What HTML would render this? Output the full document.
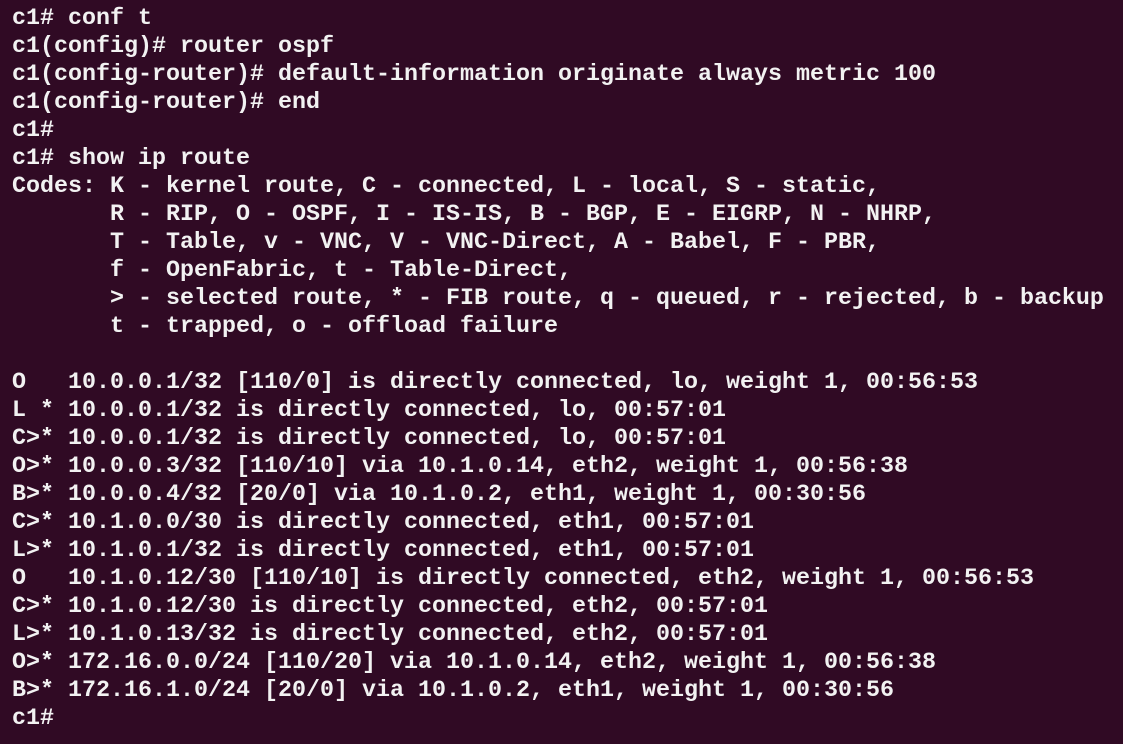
<!DOCTYPE html>
<html><head><meta charset="utf-8"><style>
html,body{margin:0;padding:0;background:#300a24;width:1123px;height:744px;overflow:hidden}
pre{margin:0;padding:5px 0 0 12px;font-family:"Liberation Mono","DejaVu Sans Mono",monospace;font-size:23.33px;line-height:28px;color:#f2f2f2;font-weight:bold;white-space:pre}
</style></head><body><pre>c1# conf t
c1(config)# router ospf
c1(config-router)# default-information originate always metric 100
c1(config-router)# end
c1#
c1# show ip route
Codes: K - kernel route, C - connected, L - local, S - static,
       R - RIP, O - OSPF, I - IS-IS, B - BGP, E - EIGRP, N - NHRP,
       T - Table, v - VNC, V - VNC-Direct, A - Babel, F - PBR,
       f - OpenFabric, t - Table-Direct,
       &gt; - selected route, * - FIB route, q - queued, r - rejected, b - backup
       t - trapped, o - offload failure

O   10.0.0.1/32 [110/0] is directly connected, lo, weight 1, 00:56:53
L * 10.0.0.1/32 is directly connected, lo, 00:57:01
C&gt;* 10.0.0.1/32 is directly connected, lo, 00:57:01
O&gt;* 10.0.0.3/32 [110/10] via 10.1.0.14, eth2, weight 1, 00:56:38
B&gt;* 10.0.0.4/32 [20/0] via 10.1.0.2, eth1, weight 1, 00:30:56
C&gt;* 10.1.0.0/30 is directly connected, eth1, 00:57:01
L&gt;* 10.1.0.1/32 is directly connected, eth1, 00:57:01
O   10.1.0.12/30 [110/10] is directly connected, eth2, weight 1, 00:56:53
C&gt;* 10.1.0.12/30 is directly connected, eth2, 00:57:01
L&gt;* 10.1.0.13/32 is directly connected, eth2, 00:57:01
O&gt;* 172.16.0.0/24 [110/20] via 10.1.0.14, eth2, weight 1, 00:56:38
B&gt;* 172.16.1.0/24 [20/0] via 10.1.0.2, eth1, weight 1, 00:30:56
c1#</pre></body></html>
